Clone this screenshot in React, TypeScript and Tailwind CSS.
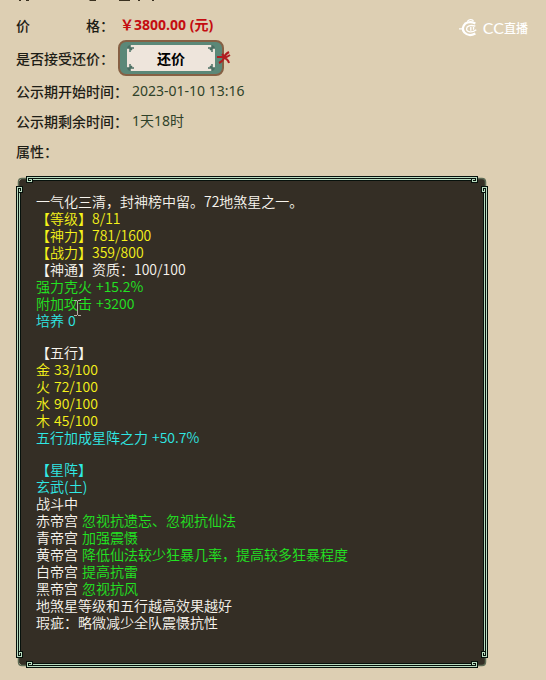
import React from "react";

type Tone = "white" | "yellow" | "green" | "cyan";
type Part = [Tone, string];

const tones: Record<Tone, string> = {
  white: "text-[#f8f5ee]",
  yellow: "text-[#f6f21a]",
  green: "text-[#22e422]",
  cyan: "text-[#2fe8e4]",
};

const groups: Part[][][] = [
  [
    [["white", "一气化三清，封神榜中留。72地煞星之一。"]],
    [["yellow", "【等级】8/11"]],
    [["yellow", "【神力】781/1600"]],
    [["yellow", "【战力】359/800"]],
    [["white", "【神通】资质：100/100"]],
    [["green", "强力克火"], ["green", "+15.2%"]],
    [["green", "附加攻击"], ["green", "+3200"]],
    [["cyan", "培养"], ["cyan", "0"]],
  ],
  [
    [["white", "【五行】"]],
    [["yellow", "金"], ["yellow", "33/100"]],
    [["yellow", "火"], ["yellow", "72/100"]],
    [["yellow", "水"], ["yellow", "90/100"]],
    [["yellow", "木"], ["yellow", "45/100"]],
    [["cyan", "五行加成星阵之力"], ["cyan", "+50.7%"]],
  ],
  [
    [["cyan", "【星阵】"]],
    [["cyan", "玄武(土)"]],
    [["white", "战斗中"]],
    [["white", "赤帝宫"], ["green", "忽视抗遗忘、忽视抗仙法"]],
    [["white", "青帝宫"], ["green", "加强震慑"]],
    [["white", "黄帝宫"], ["green", "降低仙法较少狂暴几率，提高较多狂暴程度"]],
    [["white", "白帝宫"], ["green", "提高抗雷"]],
    [["white", "黑帝宫"], ["green", "忽视抗风"]],
    [["white", "地煞星等级和五行越高效果越好"]],
    [["white", "瑕疵：略微减少全队震慑抗性"]],
  ],
];

function Corner({ className }: { className: string }) {
  return (
    <svg className={`absolute h-[18px] w-[18px] ${className}`} viewBox="0 0 18 18" shapeRendering="crispEdges" aria-hidden="true">
      <path d="M0 0H10V10H0Z" fill="#ddcfb3" />
      <path d="M5 10V18H18V5H10V2H6L2 6V10Z" fill="#342e25" />
      <path d="M2.500 10V6Q2.500 2.500 6 2.500H10" fill="none" stroke="#5d6b55" strokeWidth="1.500" shapeRendering="auto" />
      <path d="M10 0H17V7H10ZM0 10H7V17H0Z" fill="#07110c" />
      <path d="M17 1.500H11.500V5.500H15.500V3.500H13M1.500 17V11.500H5.500V15.500H3.500V13" fill="none" stroke="#b9dcc0" />
      <path d="M17 0H18V1H17ZM17 2H18V3H17ZM17 4H18V5H17ZM0 17H1V18H0ZM2 17H3V18H2ZM4 17H5V18H4Z" fill="#07110c" />
      <path d="M17 1H18V2H17ZM17 3H18V4H17ZM1 17H2V18H1ZM3 17H4V18H3Z" fill="#b9dcc0" />
    </svg>
  );
}

function Sprig({ className }: { className: string }) {
  return (
    <svg className={`absolute h-2 w-2 ${className}`} viewBox="0 0 8 8" aria-hidden="true">
      <path d="M0 0H3V3H0Z" fill="#5b8878" />
      <path d="M3 0V7M0 3H7M1 1L5 5" stroke="#4b6f63" strokeWidth="1.500" fill="none" />
    </svg>
  );
}

function Row({ label, className, children }: { label: React.ReactNode; className: string; children?: React.ReactNode }) {
  return (
    <div className={`flex items-center ${className}`}>
      <dt className="font-medium text-[#1d1d16]">{label}</dt>
      <dd className="flex items-center">{children}</dd>
    </div>
  );
}

export default function App() {
  return (
    <main className="relative min-h-screen overflow-hidden bg-[#ddcfb3] px-4 pb-3 font-['Noto_Sans_CJK_SC',sans-serif] text-sm">
      <svg className="absolute top-0 left-4 h-[3px] w-[150px]" viewBox="0 0 150 3" aria-hidden="true">
        <path d="M3 0H5V1H3ZM10 0H13V1H10ZM73 0H80V1H74ZM103 0H114V1H103ZM122 0H124V1H122ZM136 0H138V1H136Z" fill="#3a3120" />
      </svg>

      <div className="absolute top-4 right-[18px] flex items-center gap-1 text-white" aria-label="CC直播">
        <svg className="h-[22px] w-5" viewBox="0 0 22 22" fill="none" stroke="currentColor" aria-hidden="true">
          <path d="M18 6Q12 3 7 6Q2 11 6 16Q11 21 18 17" strokeWidth="2.500" />
          <path d="M9 4Q12 0 16 3M18 9Q12 7 9 10Q7 14 11 15Q15 16 19 13" strokeWidth="1.500" />
          <path d="M0 12H5M13 10V14M16 10V13" strokeWidth="1.500" />
        </svg>
        <span className="flex items-center leading-6">
          <span className="font-[Lato] text-base">CC</span>
          <span className="text-xs font-medium">直播</span>
        </span>
      </div>

      <dl>
        <Row className="h-[39px] pt-2.5" label={<span className="flex w-[98px] justify-between"><span>价</span><span>格：</span></span>}>
          <span className="pl-1.5 font-['Open_Sans','Noto_Sans_CJK_SC',sans-serif] font-bold text-[#c40c10]">￥3800.00 (元)</span>
        </Row>
        <Row className="h-[37px]" label="是否接受还价：">
          <button type="button" className="relative ml-1 flex h-9 w-[106px] rounded-lg border-2 border-[#866044] bg-[#5b8878] py-[3px] px-[7px]">
            <span className="relative flex h-full w-full items-center justify-center bg-[#eee5dc] font-bold text-black">
              还价
              <Sprig className="top-0 left-0" />
              <Sprig className="top-0 right-0 -scale-x-100" />
              <Sprig className="bottom-0 left-0 -scale-y-100" />
              <Sprig className="right-0 bottom-0 -scale-100" />
            </span>
            <svg className="absolute top-2 -right-2.5 h-4 w-4" viewBox="0 0 16 16" fill="none" stroke="#b01c20" aria-hidden="true">
              <path d="M1 7H8M13 2Q9 4 8 8Q7 11 3 13M6 4Q8 6 10 8M8 8Q12 9 13 13M9 8L14 5" strokeWidth="2" />
            </svg>
          </button>
        </Row>
        <Row className="h-[30px]" label="公示期开始时间：">
          <span className="pl-1 font-['Noto_Sans','Noto_Sans_CJK_SC',sans-serif] text-[#2f4229]">2023-01-10 13:16</span>
        </Row>
        <Row className="h-[30px]" label="公示期剩余时间：">
          <span className="pl-1 font-['Noto_Sans','Noto_Sans_CJK_SC',sans-serif] text-[#2f4229]">1天18时</span>
        </Row>
        <Row className="h-[30px]" label="属性：" />
      </dl>

      <section className="relative mt-2.5 max-w-[472px] border border-[#07110c] bg-[#342e25]">
        <div className="border border-[#b9dcc0]">
          <div className="border border-[#07110c]">
            <div className="border border-[#b9dcc0]">
              <div className="border border-[#07110c] px-[15px] pt-3 pb-8 font-[350] leading-[17px]">
                {groups.map((lines, g) => (
                  <div key={g} className={g ? "mt-[15px]" : ""}>
                    {lines.map((parts, i) => (
                      <p key={i} className="flex gap-1">
                        {parts.map(([tone, text], j) => (
                          <span key={j} className={tones[tone]}>{text}</span>
                        ))}
                      </p>
                    ))}
                  </div>
                ))}
              </div>
            </div>
          </div>
        </div>
        <Corner className="-top-px -left-px" />
        <Corner className="-top-px -right-px -scale-x-100" />
        <Corner className="-bottom-px -left-px -scale-y-100" />
        <Corner className="-right-px -bottom-px -scale-100" />
        <svg className="absolute top-[123px] left-[57px] h-4 w-[7px]" viewBox="0 0 7 16" fill="none" stroke="#b5b0a6" shapeRendering="crispEdges" aria-hidden="true">
          <path d="M0 0.500H3M4 0.500H7M3.500 1V15M0 15.500H3M4 15.500H7" />
        </svg>
      </section>
    </main>
  );
}
